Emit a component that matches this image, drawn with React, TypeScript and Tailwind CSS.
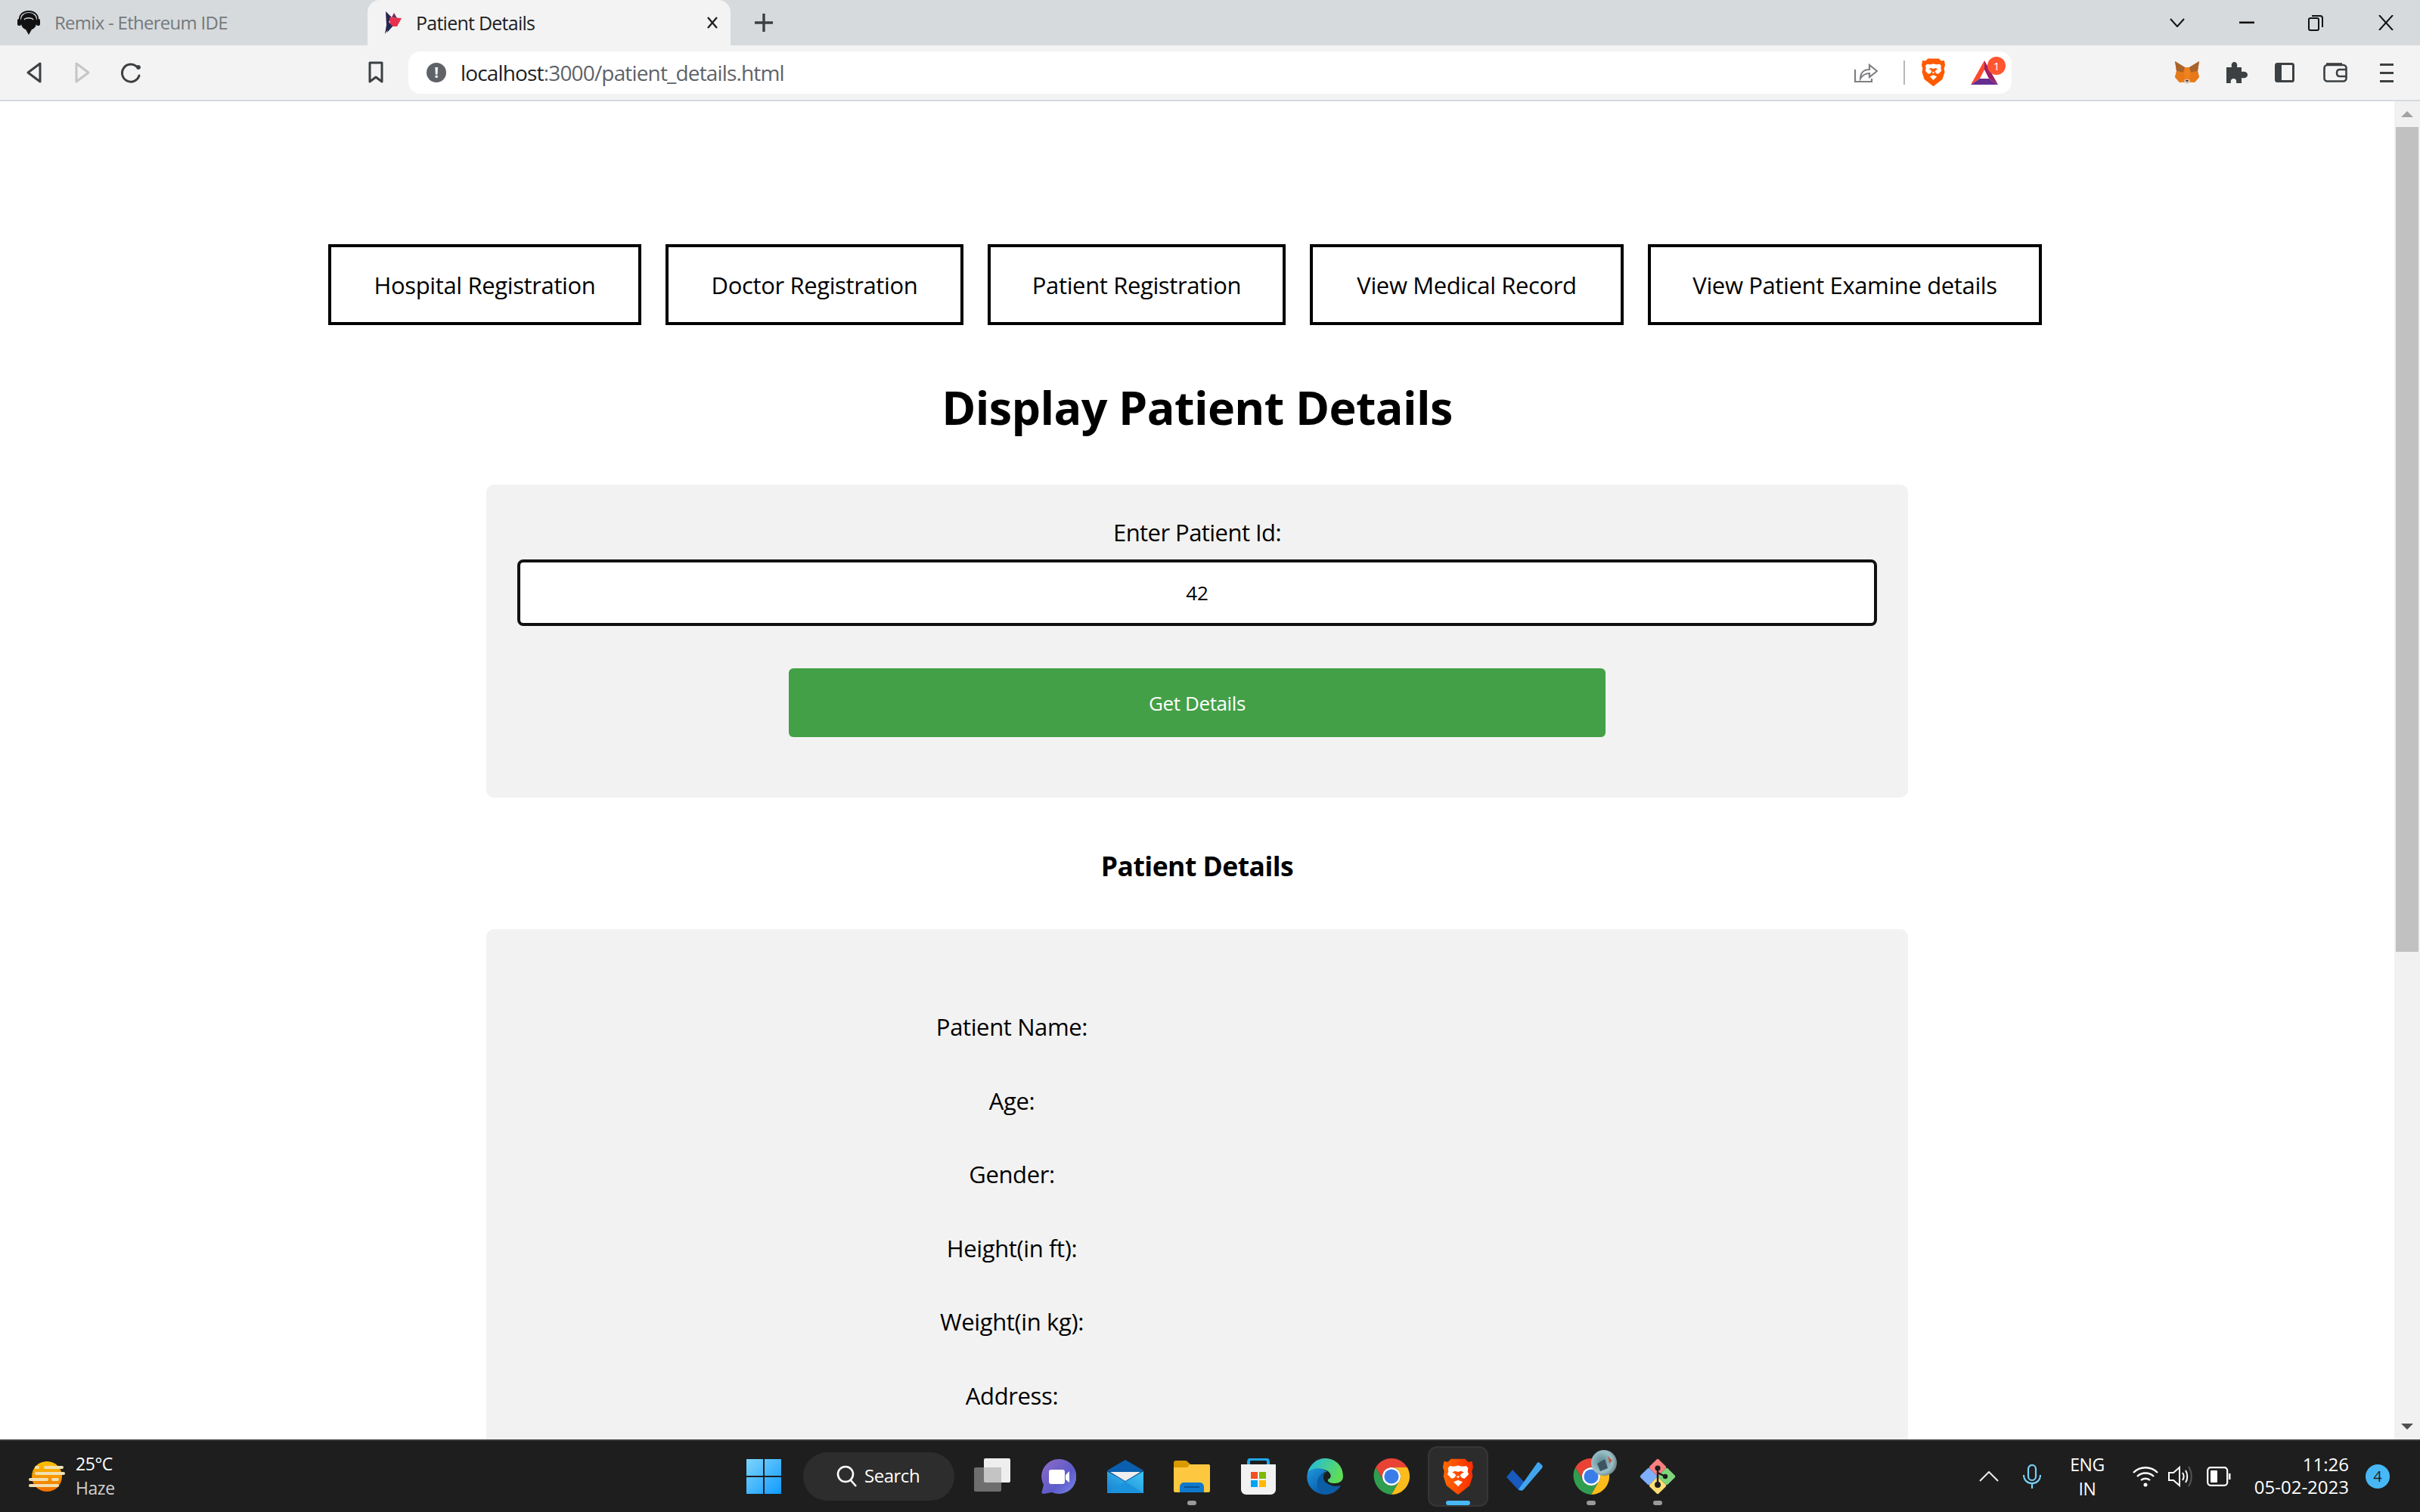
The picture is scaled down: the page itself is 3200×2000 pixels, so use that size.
import { useState, type ReactNode } from "react";

const SANS = "font-['Open_Sans','Noto_Sans',sans-serif]";

const navItems = [
  { label: "Hospital Registration", width: "w-[414px]" },
  { label: "Doctor Registration", width: "w-[394px]" },
  { label: "Patient Registration", width: "w-[394px]" },
  { label: "View Medical Record", width: "w-[415px]" },
  { label: "View Patient Examine details", width: "w-[521px]" },
];

const fields = ["Patient Name:", "Age:", "Gender:", "Height(in ft):", "Weight(in kg):", "Address:"];

function Brave({ size, grad }: { size: number; grad?: boolean }) {
  const id = grad ? "braveBig" : "braveSmall";
  return (
    <svg width={size} height={size * 1.2} viewBox="0 0 30 36">
      <defs>
        <linearGradient id={id} x1="0" x2="1" y1="0" y2="0">
          <stop offset="0" stopColor={grad ? "#ff6a00" : "#ff5a00"} />
          <stop offset="1" stopColor={grad ? "#fb2c00" : "#ff5a00"} />
        </linearGradient>
      </defs>
      <path
        d="M8 0.5H22L25 3.5L29 3L30 9L28.7 13L29.5 18L26.5 27L19 33L15 36L11 33L3.5 27L0.5 18L1.3 13L0 9L1 3L5 3.5Z"
        fill={`url(#${id})`}
      />
      <path
        d="M15 7C18 8.5 21 8 23 7.5L25 9.5L24.5 13L25.5 16L21.5 20L19 19.5L17 17L18.5 15L21 14L18 12.5L15 13.5L12 12.5L9 14L11.5 15L13 17L11 19.5L8.5 20L4.5 16L5.5 13L5 9.5L7 7.5C9 8 12 8.5 15 7Z"
        fill="#fff"
      />
      <path d="M15 19.5L13.2 18L15 17.4L16.8 18Z" fill="#fff" />
      <path d="M10.5 23.5L15 21.5L19.5 23.5L15 28Z" fill="#fff" />
    </svg>
  );
}

function Chrome({ size }: { size: number }) {
  return (
    <svg width={size} height={size} viewBox="0 0 48 48">
      <path d="M24 0C15.1 0 7.4 4.8 3.2 12l10.4 18A12 12 0 0 1 24 12h20.8C40.6 4.8 32.9 0 24 0z" fill="#ea4335" />
      <path d="M3.2 12C-4 24.5 3.5 46 24 48l10.4-18A12 12 0 0 1 13.6 30z" fill="#2f9e4f" />
      <path d="M44.8 12H24a12 12 0 0 1 10.4 18L24 48c18.5 0 30-20 20.8-36z" fill="#fbbc1c" />
      <circle cx="24" cy="24" r="12" fill="#fff" />
      <circle cx="24" cy="24" r="9.6" fill="#3b7de8" />
    </svg>
  );
}

function Fox() {
  return (
    <svg width="32" height="30" viewBox="0 0 32 30">
      <path d="M0 0L13 8H19L32 0L30 13L32 21L26 28H6L0 21L2 13Z" fill="#f0821e" />
      <path d="M0 0L13 8L11 15L2 13Z" fill="#a8642c" />
      <path d="M32 0L19 8L21 15L30 13Z" fill="#a8642c" />
      <path d="M2 13L11 15L13 24L6 28L0 21Z" fill="#e67a1a" />
      <path d="M30 13L21 15L19 24L26 28L32 21Z" fill="#e67a1a" />
      <path d="M13 24H19L20 28L16 30L12 28Z" fill="#d8c6b6" />
      <path d="M14 25H18L16 27.5Z" fill="#222" />
    </svg>
  );
}

function Bat() {
  return (
    <svg width="36" height="32" viewBox="0 0 36 32">
      <path d="M18 0L0 32L12 24L18 12Z" fill="#ff4a2d" />
      <path d="M18 0L36 32L24 24L18 12Z" fill="#9e1f63" />
      <path d="M0 32H36L24 24H12Z" fill="#662d91" />
    </svg>
  );
}

function RemixLogo() {
  return (
    <svg width="30" height="32" viewBox="0 0 30 32">
      <path d="M15 3C9 3 5 7 5 12V17C5 21 8 24 11 25L15 32L19 25C22 24 25 21 25 17V12C25 7 21 3 15 3Z" fill="#111" />
      <path d="M3 16V11C3 5 8 1 15 1S27 5 27 11V16" fill="none" stroke="#111" strokeWidth="2" />
      <rect x="0" y="11" width="5" height="9" rx="2" fill="#111" />
      <rect x="25" y="11" width="5" height="9" rx="2" fill="#111" />
      <path d="M9 12C11 9 19 9 21 12" fill="none" stroke="#d6dadd" strokeWidth="1.4" />
    </svg>
  );
}

function TabFavicon() {
  return (
    <svg width="24" height="30" viewBox="0 0 24 30">
      <path d="M3 0L11 8L7 14L9 20L2 30L4 18Z" fill="#2a2350" />
      <path d="M8 8L24 9L18 20L9 20Z" fill="#e8304f" />
      <path d="M14 2L18 9L11 8Z" fill="#7a2a5a" />
      <path d="M7 14L12 20L5 28Z" fill="#1d2a55" />
    </svg>
  );
}

function ToolIcon({ children, w = 24, h = 28 }: { children: ReactNode; w?: number; h?: number }) {
  return (
    <svg width={w} height={h} viewBox={`0 0 ${w} ${h}`} fill="none" stroke="#3c4043" strokeWidth="3" strokeLinejoin="round" strokeLinecap="round">
      {children}
    </svg>
  );
}

function BrowserChrome() {
  return (
    <header className="shrink-0">
      <div className="flex h-[60px] items-stretch bg-[#d6dadd]">
        <div className="flex w-[486px] items-center gap-[19px] pl-[23px]">
          <RemixLogo />
          <span className="text-[24px] leading-none tracking-[-0.03em] text-[#75797c]">Remix - Ethereum IDE</span>
        </div>
        <div className="flex w-[480px] items-center rounded-t-[16px] bg-[#f3f3f3] pl-[21px] pr-[16px]">
          <TabFavicon />
          <span className="ml-[19px] text-[25px] leading-none tracking-[-0.03em] text-[#202124]">Patient Details</span>
          <svg className="ml-auto" width="16" height="16" viewBox="0 0 16 16" stroke="#202124" strokeWidth="2.4">
            <path d="M2 1L14 15M14 1L2 15" />
          </svg>
        </div>
        <div className="flex w-[88px] items-center justify-center">
          <svg width="26" height="26" viewBox="0 0 26 26" stroke="#3c4043" strokeWidth="3.4">
            <path d="M13 1V25M1 13H25" />
          </svg>
        </div>
        <div className="flex flex-1 items-center justify-end pr-[35px] text-[#111]">
          <svg width="20" height="12" viewBox="0 0 20 12" fill="none" stroke="#111" strokeWidth="2">
            <path d="M1 1L10 11L19 1" />
          </svg>
          <svg className="ml-[72px]" width="20" height="4" viewBox="0 0 20 4">
            <rect width="20" height="2.6" y="0.5" fill="#111" />
          </svg>
          <svg className="ml-[71px]" width="20" height="22" viewBox="0 0 20 22" fill="none" stroke="#111" strokeWidth="2">
            <rect x="1" y="5" width="13" height="16" rx="2" />
            <path d="M5 2H16C18 2 19 3 19 5V17" />
          </svg>
          <svg className="ml-[73px]" width="20" height="20" viewBox="0 0 20 20" stroke="#111" strokeWidth="2">
            <path d="M1 0L19 20M19 0L1 20" />
          </svg>
        </div>
      </div>
      <div className="flex h-[72px] items-center bg-[#f3f3f3]">
        <div className="flex w-[540px] items-center pl-[34px]">
          <ToolIcon w={22} h={30}>
            <path d="M19 3V27L3 15Z" />
          </ToolIcon>
          <div className="ml-[42px]">
            <svg width="22" height="30" viewBox="0 0 22 30" fill="none" stroke="#c4c6c8" strokeWidth="3" strokeLinejoin="round">
              <path d="M3 3V27L19 15Z" />
            </svg>
          </div>
          <div className="ml-[38px]">
            <ToolIcon w={30} h={30}>
              <path d="M26 19A11.5 11.5 0 1 1 22 6.5" />
              <circle cx="25" cy="8" r="2.5" fill="#3c4043" strokeWidth="1" />
            </ToolIcon>
          </div>
          <div className="ml-[298px]">
            <ToolIcon w={22} h={30}>
              <path d="M3 2H19V27L11 21L3 27Z" />
            </ToolIcon>
          </div>
        </div>
        <div className="flex h-[56px] w-[2120px] items-center rounded-[16px] bg-white pl-[24px] pr-[18px]">
          <span className="flex size-[26px] items-center justify-center rounded-full bg-[#5f6368] text-[20px] font-bold leading-none text-white">!</span>
          <span className="ml-[19px] text-[28px] leading-none tracking-[-0.03em] text-[#202124]">
            localhost<span className="text-[#5f6368]">:3000/patient_details.html</span>
          </span>
          <svg className="ml-auto" width="32" height="28" viewBox="0 0 32 28" fill="none" stroke="#7d7f82" strokeWidth="2.2">
            <path d="M2 10V26H24V22" />
            <path d="M9 22C9 14 14 10 21 10V4L31 12L21 20V15C16 15 12 17 9 22Z" />
          </svg>
          <div className="ml-[34px] h-[32px] w-[2px] bg-[#b5b7b9]" />
          <div className="ml-[22px] flex">
            <Brave size={31} />
          </div>
          <div className="relative ml-[34px] flex">
            <Bat />
            <span className="absolute -right-[10px] -top-[5px] flex size-[24px] items-center justify-center rounded-full bg-[#ff5630] text-[15px] leading-none text-white">1</span>
          </div>
        </div>
        <div className="ml-[216px] flex">
          <Fox />
        </div>
        <svg className="ml-[34px]" width="30" height="28" viewBox="0 0 30 28" fill="#3c4043">
          <path d="M2 7H9C8 2 10 0 12.5 0S17 2 16 7H22V13C27 12 30 14 30 17S27 22 22 21V28H15C16 24 14 22 11.5 22S7 24 8 28H2Z" />
        </svg>
        <svg className="ml-[36px]" width="26" height="26" viewBox="0 0 26 26" fill="none" stroke="#3c4043" strokeWidth="3">
          <rect x="1.5" y="1.5" width="23" height="23" rx="2" />
          <rect x="1.5" y="1.5" width="7" height="23" fill="#3c4043" strokeWidth="1" />
        </svg>
        <svg className="ml-[38px]" width="32" height="26" viewBox="0 0 32 26" fill="none" stroke="#3c4043" strokeWidth="2.6">
          <rect x="1.5" y="3" width="29" height="21.5" rx="4" />
          <path d="M4 1.5H25" />
          <path d="M30 9H22C19 9 18 11 18 13.5S19 18 22 18H30" />
        </svg>
        <div className="ml-[43px] flex w-[18px] flex-col gap-[8px]">
          <div className="h-[3px] bg-[#3c4043]" />
          <div className="h-[3px] bg-[#3c4043]" />
          <div className="h-[3px] bg-[#3c4043]" />
        </div>
      </div>
      <div className="h-[2px] bg-[#d6dadd]" />
    </header>
  );
}

function Scrollbar() {
  return (
    <div className="flex w-[34px] shrink-0 flex-col items-center bg-[#f1f1f1]">
      <div className="flex h-[34px] w-full items-center justify-center">
        <div className="h-0 w-0 border-x-[8px] border-b-[8px] border-x-transparent border-b-[#a3a3a3]" />
      </div>
      <div className="h-[1091px] w-[30px] bg-[#c1c1c1]" />
      <div className="flex-1" />
      <div className="flex h-[34px] w-full items-center justify-center">
        <div className="h-0 w-0 border-x-[8px] border-t-[8px] border-x-transparent border-t-[#505050]" />
      </div>
    </div>
  );
}

function Page() {
  const [patientId, setPatientId] = useState("42");
  return (
    <main className="min-w-0 flex-1 overflow-hidden bg-white pt-[189px] text-black">
      <nav className="flex gap-[32px] pl-[434px]">
        {navItems.map((item) => (
          <a
            key={item.label}
            className={`flex h-[107px] items-center justify-center border-4 border-black pt-[2px] text-[31px] tracking-[-0.012em] ${item.width}`}
          >
            {item.label}
          </a>
        ))}
      </nav>
      <h1 className="mt-[66px] text-center text-[61px] font-bold leading-[86px] tracking-[-0.01em]">Display Patient Details</h1>
      <section className="mx-auto mt-[59px] w-[1880px] rounded-[10px] bg-[#f2f2f2] px-[41px] pb-[80px] pt-[43px]">
        <label className="block text-center text-[31px] leading-[40px] tracking-[-0.018em]">Enter Patient Id:</label>
        <input
          value={patientId}
          onChange={(e) => setPatientId(e.target.value)}
          className="mt-[16px] block h-[88px] w-full rounded-[8px] border-4 border-[#111] bg-white text-center text-[26px] outline-none"
        />
        <button className="mx-auto mt-[56px] block h-[91px] w-[1080px] rounded-[6px] bg-[#43a047] pt-[2px] text-[26px] tracking-[-0.015em] text-white">
          Get Details
        </button>
      </section>
      <h3 className="mt-[70px] text-center text-[35.5px] font-bold leading-[40px] tracking-[-0.015em]">Patient Details</h3>
      <section className="mx-auto mt-[64px] h-[800px] w-[1880px] rounded-[10px] bg-[#f2f2f2] pl-[500px] pt-[109px]">
        <div className="flex w-[390px] flex-col gap-[57.6px] text-center text-[31px] leading-[40px] tracking-[-0.012em]">
          {fields.map((f) => (
            <div key={f}>{f}</div>
          ))}
        </div>
      </section>
    </main>
  );
}

function TaskSlot({ children, dot, active }: { children: ReactNode; dot?: boolean; active?: boolean }) {
  return (
    <div className="relative flex h-[96px] w-[88px] shrink-0 items-center justify-center">
      {active && <div className="absolute left-[4px] top-[8px] h-[80px] w-[80px] rounded-[12px] border-2 border-[#363636] bg-[#2c2c2c]" />}
      <div className="relative flex">{children}</div>
      {dot && <div className="absolute bottom-[10px] left-[38px] h-[6px] w-[12px] rounded-full bg-[#9a9a9a]" />}
      {active && <div className="absolute bottom-[10px] left-[28px] h-[6px] w-[32px] rounded-full bg-[#47b8f5]" />}
    </div>
  );
}

function Taskbar() {
  return (
    <footer className="flex h-[96px] shrink-0 items-center border-t-2 border-[#3a3a3a] bg-[#1e1e1e] text-white">
      <div className="flex w-[966px] shrink-0 items-center pl-[38px]">
        <svg width="48" height="40" viewBox="0 0 48 40">
          <defs>
            <linearGradient id="sun" x1="0" x2="0" y1="0" y2="1">
              <stop offset="0" stopColor="#ffc000" />
              <stop offset="1" stopColor="#f07000" />
            </linearGradient>
          </defs>
          <circle cx="24" cy="20" r="20" fill="url(#sun)" />
          <g fill="#f0e0b0">
            <rect x="8" y="6" width="6" height="4" rx="2" />
            <rect x="20" y="6" width="26" height="4" rx="2" />
            <rect x="8" y="14" width="40" height="4" rx="2" />
            <rect x="0" y="22" width="26" height="4" rx="2" />
            <rect x="30" y="22" width="10" height="4" rx="2" />
            <rect x="0" y="30" width="40" height="4" rx="2" />
          </g>
        </svg>
        <div className="-mt-[3px] ml-[14px] flex flex-col gap-[8px] text-[23px] leading-[24px] tracking-[-0.02em]">
          <span>25°C</span>
          <span className="text-[#d0d0d0]">Haze</span>
        </div>
      </div>
      <TaskSlot>
        <svg width="48" height="48" viewBox="0 0 48 48">
          <defs>
            <linearGradient id="win" x1="0" x2="1" y1="0" y2="1">
              <stop offset="0" stopColor="#7ed4fb" />
              <stop offset="1" stopColor="#0f9bff" />
            </linearGradient>
          </defs>
          <path d="M1 1H23V23H1ZM25 1H47V23H25ZM1 25H23V47H1ZM25 25H47V47H25Z" fill="url(#win)" />
        </svg>
      </TaskSlot>
      <div className="ml-[8px] flex h-[64px] w-[200px] shrink-0 items-center rounded-full bg-[#2d2d2d] pl-[46px]">
        <svg width="28" height="30" viewBox="0 0 28 30" fill="none" stroke="#fff" strokeWidth="2.6" className="-ml-[2px]">
          <circle cx="12" cy="12" r="10" />
          <path d="M19 20L26 28" />
        </svg>
        <span className="-mt-[2px] ml-[9px] text-[24px] tracking-[-0.02em]">Search</span>
      </div>
      <div className="ml-[6px] flex">
        <TaskSlot>
          <svg width="48" height="48" viewBox="0 0 48 48">
            <rect x="13" y="0" width="35" height="32" rx="2" fill="#eeeeee" />
            <rect x="0" y="12" width="36" height="32" rx="2" fill="#6e6e6e" />
            <path d="M13 12H36V32H15C14 32 13 31 13 30Z" fill="#c4c4c4" />
          </svg>
        </TaskSlot>
        <TaskSlot>
          <svg width="46" height="46" viewBox="0 0 46 46">
            <defs>
              <linearGradient id="meet" x1="0" x2="1" y1="0" y2="1">
                <stop offset="0" stopColor="#8f6cc4" />
                <stop offset="0.6" stopColor="#5d5bcb" />
                <stop offset="1" stopColor="#7b8ae8" />
              </linearGradient>
            </defs>
            <path d="M23 0A23 23 0 1 1 14 44L3 46C0 46 0 44 1 42L3 34A23 23 0 0 1 23 0Z" fill="url(#meet)" />
            <rect x="10" y="14" width="21" height="19" rx="3" fill="#fff" />
            <path d="M32 21L37 16V31L32 27Z" fill="#fff" />
          </svg>
        </TaskSlot>
        <TaskSlot>
          <svg width="48" height="44" viewBox="0 0 48 44">
            <defs>
              <linearGradient id="mail" x1="0" x2="1" y1="1" y2="0">
                <stop offset="0" stopColor="#1780d0" />
                <stop offset="1" stopColor="#41c8f5" />
              </linearGradient>
            </defs>
            <path d="M24 0L48 14L24 30L0 14Z" fill="#0a5fae" />
            <path d="M4 16H44L24 28Z" fill="#eeeeee" />
            <path d="M0 15L24 29L48 15V44H0Z" fill="url(#mail)" />
            <path d="M0 44L24 29L48 44Z" fill="#1b94dd" />
          </svg>
        </TaskSlot>
        <TaskSlot dot>
          <svg width="48" height="42" viewBox="0 0 48 42">
            <path d="M0 3C0 1 1 0 3 0H15C17 0 18 1 20 3L22 5H46C47 5 48 6 48 7V12H0Z" fill="#d99a00" />
            <path d="M0 9L18 9L21 5H46C47 5 48 6 48 7V40C48 41 47 42 46 42H2C1 42 0 41 0 40Z" fill="#fdc83f" />
            <path d="M8 42V35C8 32 10 29 13 29H35C38 29 40 32 40 35V42Z" fill="#0f79cc" />
            <rect x="14" y="34" width="20" height="2" fill="#0a4f8f" />
          </svg>
        </TaskSlot>
        <TaskSlot>
          <svg width="46" height="48" viewBox="0 0 46 48">
            <path d="M10 12V5C10 2 11 1 14 1H32C35 1 36 2 36 5V12" fill="none" stroke="#1ea7ec" strokeWidth="4" />
            <path d="M0 8H46V41C46 45 43 48 39 48H7C3 48 0 45 0 41Z" fill="#f2f2f2" />
            <rect x="13" y="18" width="9" height="9" fill="#f25022" />
            <rect x="24" y="18" width="9" height="9" fill="#7fba00" />
            <rect x="13" y="29" width="9" height="9" fill="#00a4ef" />
            <rect x="24" y="29" width="9" height="9" fill="#ffb900" />
          </svg>
        </TaskSlot>
        <TaskSlot>
          <svg width="48" height="48" viewBox="0 0 48 48">
            <defs>
              <linearGradient id="edgeA" x1="0" x2="1" y1="0" y2="0.4">
                <stop offset="0" stopColor="#1fb6e8" />
                <stop offset="1" stopColor="#5fdc5a" />
              </linearGradient>
              <linearGradient id="edgeB" x1="0" x2="0.6" y1="0" y2="1">
                <stop offset="0" stopColor="#1d9ade" />
                <stop offset="1" stopColor="#0a5aa8" />
              </linearGradient>
            </defs>
            <path d="M24 0C38 0 48 10 48 24C48 30 43 33 37 33C31 33 27 31 27 28C32 27 33 23 30 19C25 13 9 12 1 19C4 8 13 0 24 0Z" fill="url(#edgeA)" />
            <path d="M1 19C7 12 21 11 27 18C22 18 14 24 14 33C14 41 21 47 27 48C11 49 -3 36 1 19Z" fill="url(#edgeB)" />
            <path d="M14 32C14 24 21 19 26 20C23 24 24 35 37 37C41 37 44 36 45 36C41 43 33 48 25 48C19 47 14 40 14 32Z" fill="#0b5ea6" />
            <path d="M24 20C30 20 33 24 28 28C27 31 31 34 37 34C31 37 22 32 22 26C22 23 22 21 24 20Z" fill="#1e1e1e" />
          </svg>
        </TaskSlot>
        <TaskSlot>
          <Chrome size={48} />
        </TaskSlot>
        <TaskSlot active>
          <Brave size={40} grad />
        </TaskSlot>
        <TaskSlot>
          <svg width="48" height="38" viewBox="0 0 48 38">
            <path d="M0 20L8 10L24 27L17 38Z" fill="#185abd" />
            <path d="M16 36L40 2C41 0 42 0 44 1L47 4C48 5 48 6 47 8L22 37C20 38 18 38 16 36Z" fill="#41a5ee" />
          </svg>
        </TaskSlot>
        <TaskSlot dot>
          <div className="relative flex">
            <Chrome size={48} />
            <svg className="absolute -right-[10px] -top-[11px]" width="34" height="34" viewBox="0 0 34 34">
              <defs>
                <radialGradient id="avatar" cx="0.4" cy="0.45" r="0.7">
                  <stop offset="0" stopColor="#5f8a92" />
                  <stop offset="0.6" stopColor="#9bc0c8" />
                  <stop offset="1" stopColor="#56656a" />
                </radialGradient>
              </defs>
              <circle cx="17" cy="17" r="17" fill="url(#avatar)" />
              <path d="M8 18L18 12L22 24L12 28Z" fill="#3c5560" />
              <path d="M22 8L28 14L24 18Z" fill="#c25a4a" />
            </svg>
          </div>
        </TaskSlot>
        <TaskSlot dot>
          <svg width="50" height="50" viewBox="0 0 50 50">
            <rect x="4.5" y="16.5" width="17" height="17" rx="2" transform="rotate(45 13 25)" fill="#7fb0ff" />
            <rect x="16.5" y="4.5" width="17" height="17" rx="2" transform="rotate(45 25 13)" fill="#f98080" />
            <rect x="16.5" y="28.5" width="17" height="17" rx="2" transform="rotate(45 25 37)" fill="#fddd72" />
            <rect x="28.5" y="16.5" width="17" height="17" rx="2" transform="rotate(45 37 25)" fill="#7fd67a" />
            <path d="M25 14V36M25 20L35 25" fill="none" stroke="#1e1e1e" strokeWidth="2.4" />
            <circle cx="25" cy="36" r="4" fill="#1e1e1e" />
            <circle cx="25" cy="14" r="3.6" fill="#1e1e1e" />
            <circle cx="35" cy="25" r="3.2" fill="#1e1e1e" />
          </svg>
        </TaskSlot>
      </div>
      <div className="ml-[381px] flex items-center">
        <svg width="26" height="14" viewBox="0 0 26 14" fill="none" stroke="#eee" strokeWidth="2">
          <path d="M1 13L13 1L25 13" />
        </svg>
        <svg className="ml-[32px]" width="24" height="32" viewBox="0 0 24 32" fill="none" stroke="#79d0f5" strokeWidth="2.2">
          <rect x="7" y="1" width="10" height="20" rx="5" />
          <path d="M1 14C1 21 6 25 12 25S23 21 23 14M12 25V32" />
        </svg>
        <div className="ml-[37px] flex w-[48px] flex-col items-center gap-[6px] text-[23px] leading-[26px] tracking-[-0.02em]">
          <span>ENG</span>
          <span>IN</span>
        </div>
        <svg className="ml-[36px]" width="34" height="30" viewBox="0 0 34 30" fill="none" stroke="#fff" strokeWidth="2.4">
          <path d="M1 10C10 1 24 1 33 10" />
          <path d="M6 15C12 9 22 9 28 15" />
          <path d="M11 20C14 17 20 17 23 20" />
          <circle cx="17" cy="26" r="2.5" fill="#fff" stroke="none" />
        </svg>
        <svg className="ml-[13px]" width="32" height="32" viewBox="0 0 32 32" fill="none" stroke="#fff" strokeWidth="2">
          <path d="M1 11H7L15 4V28L7 21H1Z" />
          <path d="M19 11C21 14 21 18 19 21M23 8C26 12 26 20 23 24" />
          <path d="M27 3C32 11 32 21 27 29" stroke="#555" />
        </svg>
        <svg className="ml-[19px]" width="32" height="26" viewBox="0 0 32 26" fill="none">
          <rect x="1.2" y="1.2" width="26" height="23.6" rx="4" stroke="#fff" strokeWidth="2.2" />
          <rect x="5" y="5" width="9" height="16" rx="1" fill="#fff" />
          <path d="M29 9H31.5V17H29Z" fill="#fff" />
        </svg>
        <div className="-mt-[4px] ml-[26px] flex w-[130px] flex-col items-end gap-[5px] whitespace-nowrap text-[24px] leading-[25px]">
          <span>11:26</span>
          <span>05-02-2023</span>
        </div>
        <div className="ml-[22px] flex size-[32px] items-center justify-center rounded-full bg-[#47b8f5] text-[20px] text-[#1e1e1e]">4</div>
      </div>
    </footer>
  );
}

export default function App() {
  return (
    <div className={`flex h-screen w-full flex-col overflow-hidden ${SANS}`}>
      <BrowserChrome />
      <div className="flex min-h-0 flex-1">
        <Page />
        <Scrollbar />
      </div>
      <Taskbar />
    </div>
  );
}
